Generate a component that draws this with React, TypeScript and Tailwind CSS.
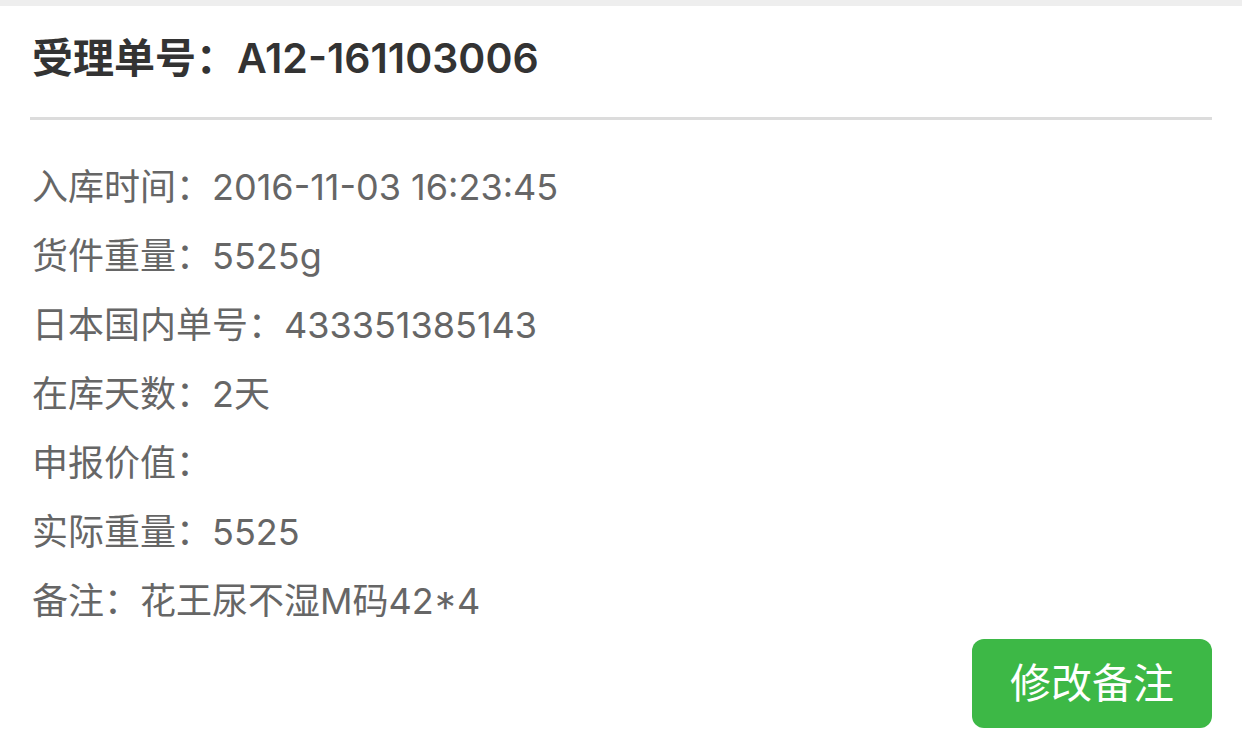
import React from "react";

const rows: [string, string][] = [
  ["入库时间：", "2016-11-03 16:23:45"],
  ["货件重量：", "5525g"],
  ["日本国内单号：", "433351385143"],
  ["在库天数：", "2天"],
  ["申报价值：", ""],
  ["实际重量：", "5525"],
  ["备注：", "花王尿不湿M码42*4"],
];

export default function App() {
  return (
    <div
      className="w-[1242px] h-[741px] bg-white overflow-hidden"
      style={{ fontFamily: 'Inter, "Noto Sans CJK SC", sans-serif' }}
    >
      <div className="h-[6px] bg-[#eeeeee]" />
      <div className="px-[30px]">
        <div className="pt-[24px] pb-[31px] pl-[2px] text-[41px] leading-[56px] font-semibold text-[#333333]">
          受理单号：A12-161103006
        </div>
        <div className="h-[3px] bg-[#dcdcdc]" />
        <div className="pt-[33px] pl-[2px]">
          {rows.map(([k, v]) => (
            <div key={k} className="h-[69px] leading-[69px] text-[36px] text-[#666666] whitespace-nowrap">
              {k}
              {v}
            </div>
          ))}
        </div>
        <div className="flex justify-end mt-[3px]">
          <button className="w-[240px] h-[89px] rounded-[12px] bg-[#3db846] text-white text-[41px] flex items-center justify-center">
            修改备注
          </button>
        </div>
      </div>
    </div>
  );
}
